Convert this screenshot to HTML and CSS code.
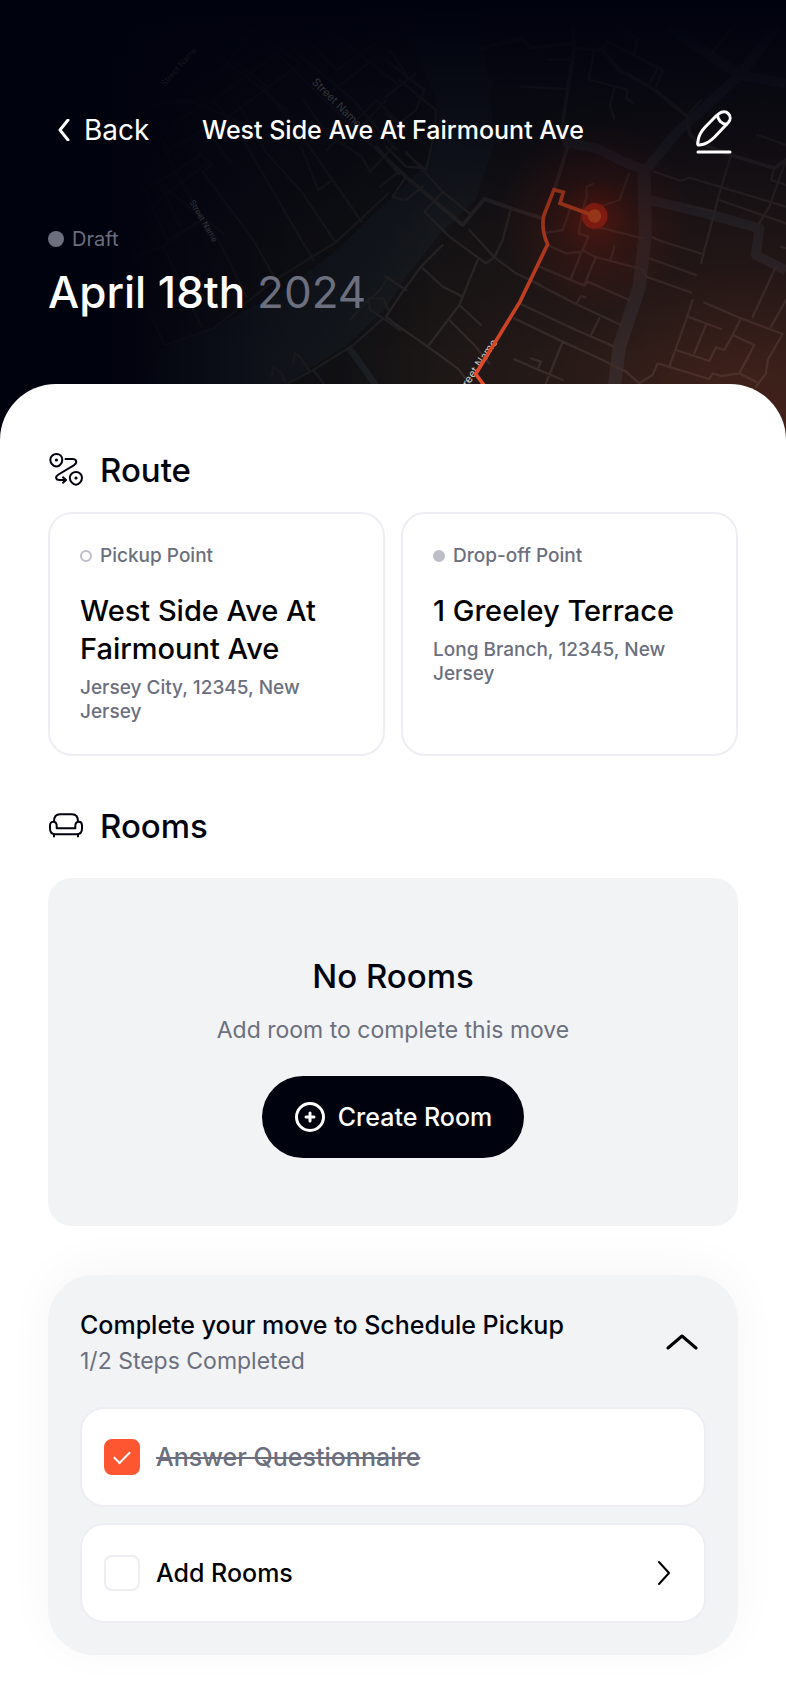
FILE: index.html
```
<!DOCTYPE html>
<html lang="en">
  <head>
    <meta charset="UTF-8" />
    <meta name="viewport" content="width=device-width, initial-scale=1.0" />
    <title>Move Details</title>
    <link rel="stylesheet" href="styles.css">
  </head>
  <body>
    <header class="hero">
      <svg class="map" viewBox="0 0 2358 1350" preserveAspectRatio="xMidYMin slice" aria-hidden="true">
        <defs>
          <radialGradient id="warm" gradientUnits="userSpaceOnUse" cx="2250" cy="1330" r="1250">
            <stop offset="0" stop-color="#ff5632" stop-opacity="0.22" />
            <stop offset="0.45" stop-color="#ff5632" stop-opacity="0.08" />
            <stop offset="1" stop-color="#ff5632" stop-opacity="0" />
          </radialGradient>
          <radialGradient id="glow" gradientUnits="userSpaceOnUse" cx="1784" cy="648" r="290">
            <stop offset="0" stop-color="#ff2600" stop-opacity="0.32" />
            <stop offset="0.4" stop-color="#ff2600" stop-opacity="0.12" />
            <stop offset="1" stop-color="#ff2600" stop-opacity="0" />
          </radialGradient>
          <linearGradient id="fadeLeft">
            <stop offset="0.14" stop-color="#00020e" />
            <stop offset="0.34" stop-color="#00020e" stop-opacity="0.4" />
            <stop offset="0.56" stop-color="#00020e" stop-opacity="0" />
          </linearGradient>
          <linearGradient id="fadeTop" x2="0" y2="1">
            <stop offset="0.02" stop-color="#00020e" />
            <stop offset="0.2" stop-color="#00020e" stop-opacity="0.68" />
            <stop offset="0.5" stop-color="#00020e" stop-opacity="0.25" />
            <stop offset="0.8" stop-color="#00020e" stop-opacity="0" />
          </linearGradient>
          <linearGradient id="routeLine" gradientUnits="userSpaceOnUse" x1="0" y1="560" x2="0" y2="1150">
            <stop offset="0" stop-color="#8a2d18" />
            <stop offset="1" stop-color="#e84c2a" />
          </linearGradient>
        </defs>

        <rect width="2358" height="1350" fill="#151515" />
        <path fill="#181d20" d="M340 1350 480 1050 650 978 860 865 1010 750 1160 605 1180 590 1288 480 1313 400 1308 300 1248 160 1170 40 1200 0 1430 0 1450 140 1466 235 1482 240 1468 270 1483 430 1428 600 1323 700 1218 830 1158 925 1040 1035 860 1150 700 1350Z" />

        <!-- canals -->
        <g fill="none" stroke="#1f2327" stroke-linejoin="round">
          <path stroke-width="40" d="M1838 1200 1858 1040 1918 860 1936 700 1932 520" />
          <path stroke-width="30" d="M1690 425 1790 445 1860 480 1936 512 2028 400 2220 225 2358 250M2000 80 2220 225 2330 80M1948 600 2118 640 2278 685 2268 765 2358 812" />
          <path stroke-width="20" d="M1045 1040 1130 1160" />
        </g>

        <!-- roads -->
        <g fill="none" stroke="#242424" stroke-width="7" stroke-linecap="round" stroke-linejoin="round">
          <path d="M450 620 620 490M490 560 670 700M520 370 640 300 830 160M430 320 560 300 760 380M500 455 700 340 900 190M600 130 740 230 860 330M660 220 760 90 900 190M700 180 800 260" />
          <path d="M480 400 520 510 660 730 740 890M600 460 635 495 607 515 760 720 825 835M430 570 520 520 600 465M470 530 540 680M430 560 500 720 610 660M490 740 605 980M400 770 490 740 600 660M430 900 495 1035 640 985 825 840 1010 725 1165 580" />
          <path d="M640 420 690 485M640 300 730 420 840 610 940 780M720 320 800 460 905 575 1005 725M790 260 900 400 1085 665M910 300 980 400 1085 470 1110 515 1180 440M980 450 1130 300 1200 370M905 445 955 570 990 545M830 160 1150 470M880 150 1060 300 1190 450M1000 100 1190 250M920 120 1010 210 1130 130M1000 270 1130 170M1085 380 1158 300M1140 560 1190 520" />
          <path d="M865 1150 940 1110 1060 1035 1150 955 1200 990M1150 955 1110 930 1105 895 1150 895 1165 930M940 1110 970 1150M880 1090 885 1060 900 1070 930 1115M815 1130 820 1100 845 1120 855 1145M1050 960 1085 920 1140 870 1165 830" />
        </g>
        <g transform="translate(1158 0)" fill="none" stroke="#2a2828" stroke-width="7" stroke-linecap="round" stroke-linejoin="round">
          <path d="M0 180 115 270 90 330 0 400M0 290 90 220M40 240 150 330 145 400 120 510 60 460M0 440 60 500 120 505M10 150 60 220M0 340 60 390" />
          <path stroke-width="12" d="M0 475 60 530 230 675M-30 440 40 520M230 675 295 597 375 625 470 655" />
          <path d="M60 455 170 575 250 640M60 530 20 590 50 600M110 560 60 600M170 575 115 635 190 710 300 790 325 772 250 690M170 735 105 800 50 875 0 950 25 970 125 1040 215 1105 250 1150M105 800 170 860 230 890 220 915 285 975M275 780 230 890M220 915 125 1040M190 960 260 1030 310 1090M0 830 60 870M375 625 350 720 325 772 390 820 465 855M470 700 530 690 555 620" />
          <path d="M560 80 565 145 540 300 525 410 545 440 505 570M285 145 405 115 435 142 565 130M565 145 650 150 700 210 800 265 905 350 910 400 940 430 1035 465 1165 505 1200 480" stroke-width="11" />
          <path d="M405 260 540 267M485 178 550 178M625 150 608 238 725 270 720 295 740 308M685 265 672 315 685 355M650 145 665 125 830 210 810 260M815 205 790 250M700 80 755 120 745 160M970 170 1040 80M910 340 945 300M1200 480 1150 620 1120 670M1035 465 1000 580 945 790M1115 405 1200 435M805 515 885 543 910 533 1000 560 1200 620M1165 505 1155 540 1200 555M1000 600 1200 670M905 618 985 635" />
          <path d="M730 520 700 600 640 620M620 552 602 560 602 590 590 630 578 700 607 710 590 750 625 770 770 808 780 830 915 877M630 680 770 715M685 740 675 775M485 735 540 760 590 755M585 760 555 835M630 770 595 855M460 800 595 857 605 845 730 900M430 840 570 912 585 888 598 892M570 912 705 975M640 955 615 1005M400 910 570 990 685 1040M385 955 530 1025 650 1080 720 1115 760 1150M530 1025 480 1150M385 1078 455 1108 465 1085 435 1075M455 1108 530 1140M790 775 930 825M800 712 830 725 950 762" />
          <path d="M955 908 1065 955 1190 1002 1145 1080 1140 1120 1110 1160M1170 800 1100 950M1200 900 1155 980M1065 955 1040 1005 1105 1035 1060 1120M920 900 900 960 850 1100M905 950 1005 987M960 975 925 1060M870 1050 970 1083 990 1042 1015 1050 1040 1005M760 1150 800 1125 815 1090 970 1137 980 1120 1005 1128 1060 1120 1110 1145M1185 740 1200 745" />
        </g>

        <rect width="2358" height="1350" fill="url(#warm)" />
        <circle cx="1784" cy="648" r="290" fill="url(#glow)" />
        <rect width="2358" height="1350" fill="url(#fadeLeft)" />
        <rect width="2358" height="1350" fill="url(#fadeTop)" />

        <text transform="translate(494 260) rotate(-48)" font-size="25" fill="#15161d">Street Name</text>
        <text transform="translate(934 248) rotate(45)" font-size="33" fill="#343539">Street Name</text>
        <text transform="translate(568 606) rotate(60)" font-size="24" fill="#343539">Street Name</text>
        <text transform="translate(1385 1188) rotate(-56)" font-size="33" fill="#c8c8c8">Street Name</text>

        <circle cx="1784" cy="648" r="39" fill="#7a1a10" />
        <path fill="none" stroke="url(#routeLine)" stroke-width="11" stroke-linejoin="miter" d="M1784 648 1680 610 1690 577 1662 569 1632 645Q1622 685 1643 733L1560 905 1427 1122 1470 1180" />
        <circle cx="1784" cy="648" r="20" fill="#963618" />
      </svg>

      <nav class="nav">
        <a class="back" href="#">
          <svg width="12" height="22" viewBox="0 0 12 22" fill="none" stroke="currentColor" stroke-width="3" stroke-linecap="round" stroke-linejoin="round" aria-hidden="true">
            <path d="M10 1 2 11 10 21" />
          </svg>
          Back
        </a>
        <h1 class="nav-title">West Side Ave At Fairmount Ave</h1>
        <button class="edit" type="button" aria-label="Edit move">
          <svg width="36" height="44" viewBox="0 0 36 44" fill="none" stroke="currentColor" stroke-width="3" stroke-linecap="round" stroke-linejoin="round" aria-hidden="true">
            <path d="M19.500 6.500 23 3.700C26 1 30 1.200 32.300 3.600 34.800 6.200 34.700 10 32.300 12.600L18.600 27C15 30.500 11.500 33 7.500 34.200L3.500 35C2 35.300 1.500 34.500 1.700 33.200L2.300 29.500C3.200 25 5.500 21 9 17.300Z" />
            <path d="M21.500 5.300C22 10 25.500 14 30.500 14.300" />
            <path d="M2 42H34" />
          </svg>
        </button>
      </nav>

      <div class="status"><span class="status-dot"></span>Draft</div>
      <p class="date">April 18th <span class="year">2024</span></p>
    </header>

    <main class="sheet">
      <section>
        <h2 class="section-title">
          <svg width="36" height="36" viewBox="0 0 36 36" fill="none" stroke="currentColor" stroke-width="2" stroke-linecap="round" stroke-linejoin="round" aria-hidden="true">
            <path d="M8.500 2C12 2 14.300 4.600 14.300 7.700 14.300 11 11.500 14.500 8.500 14.500 5.200 14.500 2.300 11 2.300 7.700 2.300 4.600 5 2 8.500 2Z" />
            <path d="M28 20C31.500 20 34 22.700 34 25.700 34 29 31 32.700 28 32.700 24.800 32.700 21.800 29 21.800 25.700 21.800 22.700 24.500 20 28 20Z" />
            <path d="M17.500 7H24.500C28.500 7 29.500 10.500 26.500 12.800L10.500 22.500C6.500 25 8 28 11.500 28H17.500M15 25.300 18 28 15 30.700" />
            <circle cx="8.400" cy="8" r="1.600" fill="currentColor" stroke="none" />
            <circle cx="28" cy="26" r="1.600" fill="currentColor" stroke="none" />
          </svg>
          Route
        </h2>
        <div class="points">
          <article class="point">
            <p class="point-label"><span class="dot dot-empty"></span>Pickup Point</p>
            <h3 class="point-name">West Side Ave At Fairmount Ave</h3>
            <p class="point-place">Jersey City, 12345, New Jersey</p>
          </article>
          <article class="point">
            <p class="point-label"><span class="dot"></span>Drop-off Point</p>
            <h3 class="point-name">1 Greeley Terrace</h3>
            <p class="point-place">Long Branch, 12345, New Jersey</p>
          </article>
        </div>
      </section>

      <section class="rooms">
        <h2 class="section-title">
          <svg width="36" height="36" viewBox="0 0 36 36" fill="none" stroke="currentColor" stroke-width="2" stroke-linecap="round" stroke-linejoin="round" aria-hidden="true">
            <path d="M6 13.500C6 8.500 8 6.200 12 6.200H24C28 6.200 30 8.500 30 13.500" />
            <path d="M8.700 18V20.200H27.300V18C27.300 15.500 28.800 13.800 31 13.800 33.200 13.800 34 15.700 34 17.500V20.500C34 24.300 32 26.300 28.500 26.300H7.500C4 26.300 2 24.300 2 20.500V17.500C2 15.700 2.800 13.800 5 13.800 7.200 13.800 8.700 15.500 8.700 18Z" />
            <path d="M6 26.500V28.500M30 26.500V28.500" />
          </svg>
          Rooms
        </h2>
        <div class="empty">
          <h3 class="empty-title">No Rooms</h3>
          <p class="empty-text">Add room to complete this move</p>
          <button class="create" type="button">
            <svg width="32" height="32" viewBox="0 0 32 32" fill="none" stroke="currentColor" stroke-width="3" stroke-linecap="round" aria-hidden="true">
              <circle cx="16" cy="16" r="13.500" />
              <path d="M16 12V20M12 16H20" />
            </svg>
            Create Room
          </button>
        </div>
      </section>

      <section class="steps">
        <div class="steps-head">
          <div>
            <h2 class="steps-title">Complete your move to Schedule Pickup</h2>
            <p class="steps-count">1/2 Steps Completed</p>
          </div>
          <button class="toggle" type="button" aria-label="Collapse steps" aria-expanded="true">
            <svg width="32" height="18" viewBox="0 0 32 18" fill="none" stroke="currentColor" stroke-width="3" stroke-linecap="round" stroke-linejoin="round" aria-hidden="true">
              <path d="M2 15 16 3 30 15" />
            </svg>
          </button>
        </div>
        <ul class="step-list">
          <li class="step">
            <input class="check" type="checkbox" id="answer" checked />
            <label class="step-name step-done" for="answer">Answer Questionnaire</label>
          </li>
          <li class="step">
            <input class="check" type="checkbox" id="addRooms" />
            <label class="step-name" for="addRooms">Add Rooms</label>
            <a class="step-link" href="#" aria-label="Open add rooms">
              <svg width="14" height="26" viewBox="0 0 14 26" fill="none" stroke="currentColor" stroke-width="2" stroke-linecap="round" stroke-linejoin="round" aria-hidden="true">
                <path d="M2 2 12 13 2 24" />
              </svg>
            </a>
          </li>
        </ul>
      </section>
    </main>
  </body>
</html>
```

FILE: styles.css
```
* {
  box-sizing: border-box;
}

body {
  font-family: Inter, "Liberation Sans", sans-serif;
  background: #fff;
  color: #00020e;
  margin: 0;
}

h1,
h2,
h3,
p,
ul {
  margin: 0;
  padding: 0;
  font-weight: 500;
}

button {
  font-family: inherit;
  border: none;
  background: none;
  color: inherit;
  padding: 0;
  cursor: pointer;
}

a {
  color: inherit;
  text-decoration: none;
}

svg {
  display: block;
  flex-shrink: 0;
}

/* header with the map behind it */
.hero {
  position: relative;
  padding: 102px 48px 130px;
  background: #00020e;
  color: #fff;
}

.map {
  position: absolute;
  inset: 0;
  width: 100%;
  height: 100%;
}

.nav,
.status,
.date {
  position: relative;
}

.nav {
  display: grid;
  grid-template-columns: 1fr auto 1fr;
  align-items: center;
  min-height: 56px;
}

.back {
  display: flex;
  align-items: center;
  gap: 14px;
  padding-left: 10px;
  font-size: 28px;
  line-height: 36px;
}

.nav-title {
  font-size: 25px;
  line-height: 36px;
  text-align: center;
}

.edit {
  justify-self: end;
  padding: 8px 6px 4px;
}

.status {
  display: flex;
  align-items: center;
  gap: 8px;
  margin-top: 68px;
  font-size: 20px;
  line-height: 26px;
  color: #6b6f7e;
}

.status-dot {
  width: 16px;
  height: 16px;
  border-radius: 50%;
  background: #6b6f7e;
}

.date {
  margin-top: 12px;
  font-size: 44px;
  line-height: 56px;
}

.year {
  font-weight: 400;
  color: #6b6f7e;
}

.sheet {
  position: relative;
  margin-top: -66px;
  padding: 64px 48px 48px;
  border-radius: 56px 56px 0 0;
  background: #fff;
}

.section-title {
  display: flex;
  align-items: center;
  gap: 16px;
  font-size: 33px;
  line-height: 44px;
}

.points {
  display: grid;
  grid-template-columns: 1fr 1fr;
  gap: 16px;
  margin-top: 20px;
}

.point {
  padding: 30px;
  border: 2px solid #ededf3;
  border-radius: 24px;
}

.point-label {
  display: flex;
  align-items: center;
  gap: 8px;
  font-size: 19px;
  line-height: 24px;
  color: #6b6f7e;
}

.dot {
  width: 12px;
  height: 12px;
  border: 2px solid #bdbdca;
  border-radius: 50%;
  background: #bdbdca;
}

.dot-empty {
  background: none;
}

.point-name {
  margin-top: 24px;
  font-size: 29px;
  line-height: 38px;
  color: #000;
}

.point-place {
  margin-top: 8px;
  font-size: 19px;
  line-height: 24px;
  color: #6b6f7e;
}

.rooms {
  margin-top: 48px;
}

.empty {
  display: flex;
  flex-direction: column;
  align-items: center;
  margin-top: 30px;
  padding: 76px 32px 68px;
  border-radius: 24px;
  background: #f1f3f5;
  text-align: center;
}

.empty-title {
  font-size: 33px;
  line-height: 44px;
}

.empty-text {
  margin-top: 16px;
  font-size: 23px;
  font-weight: 400;
  line-height: 32px;
  color: #6b6f7e;
}

.create {
  display: flex;
  align-items: center;
  gap: 12px;
  min-height: 82px;
  margin-top: 30px;
  padding: 0 32px;
  border-radius: 41px;
  background: #00020e;
  color: #fff;
  font-size: 25px;
  font-weight: 500;
}

.steps {
  margin-top: 49px;
  padding: 32px;
  border-radius: 46px;
  background: #f1f3f5;
  box-shadow: 0 -8px 48px rgba(0, 0, 0, 0.04);
}

.steps-head {
  display: flex;
  align-items: center;
  justify-content: space-between;
  gap: 16px;
}

.steps-title {
  font-size: 25px;
  line-height: 36px;
}

.steps-count {
  margin-top: 2px;
  font-size: 23px;
  font-weight: 400;
  line-height: 32px;
  color: #6b6f7e;
}

.toggle {
  padding: 8px;
  color: #000;
}

.step-list {
  display: flex;
  flex-direction: column;
  gap: 16px;
  margin-top: 30px;
  list-style: none;
}

.step {
  display: flex;
  align-items: center;
  gap: 16px;
  min-height: 100px;
  padding: 0 33px 0 22px;
  border: 2px solid #ededf3;
  border-radius: 24px;
  background: #fff;
}

.check {
  appearance: none;
  display: grid;
  place-items: center;
  flex-shrink: 0;
  width: 36px;
  height: 36px;
  margin: 0;
  border: 2px solid #ededf3;
  border-radius: 8px;
}

.check:checked {
  border-color: #ff5632;
  background: #ff5632;
}

.check:checked::after {
  content: "";
  width: 14px;
  height: 7px;
  margin-bottom: 4px;
  border: solid #fff;
  border-width: 0 0 2px 2px;
  transform: rotate(-45deg);
}

.step-name {
  flex: 1;
  font-size: 25px;
  font-weight: 500;
  line-height: 36px;
  color: #000;
}

.step-done {
  color: #6b6f7e;
  text-decoration: line-through;
}

.step-link {
  color: #000;
}

@media (max-width: 640px) {
  .points {
    grid-template-columns: 1fr;
  }

  .nav-title {
    font-size: 20px;
  }
}
```
